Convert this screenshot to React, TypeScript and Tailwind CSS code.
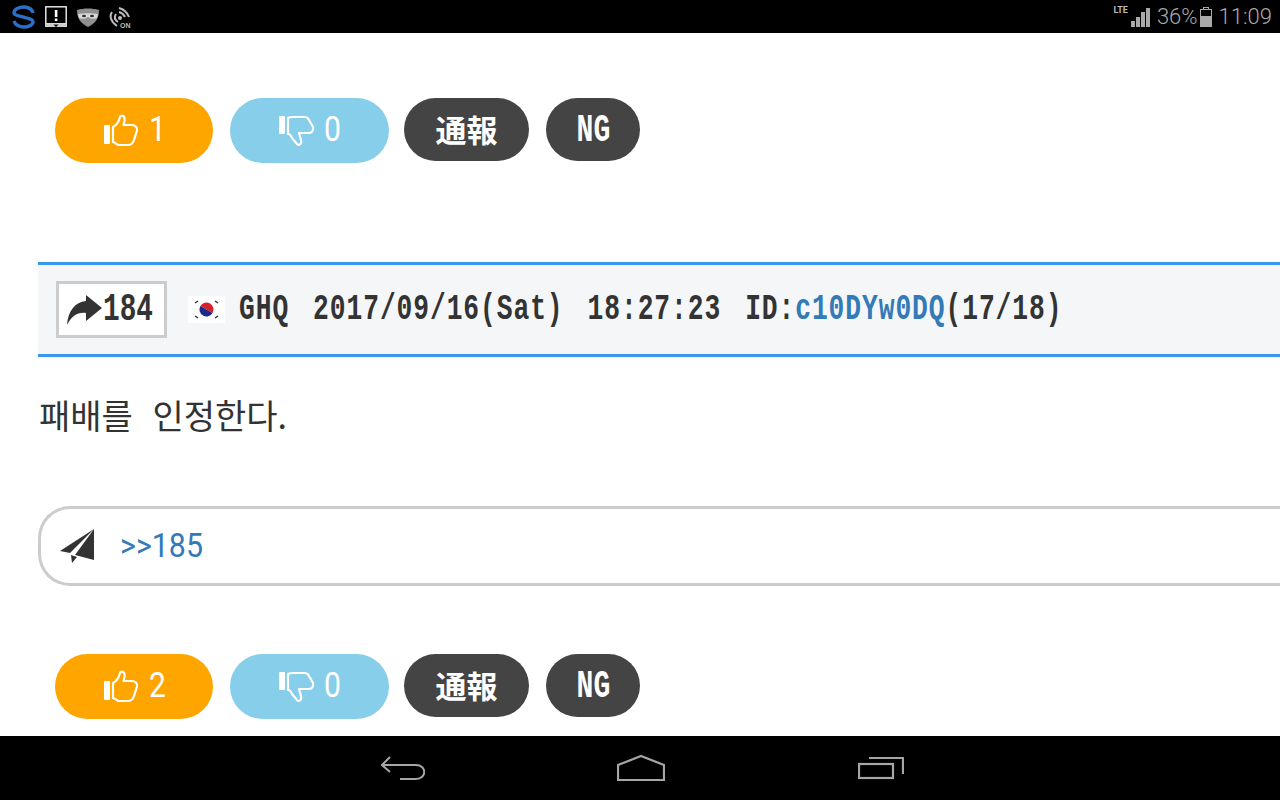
const mono = "font-['Liberation_Mono','Noto_Sans_CJK_KR',monospace]"

function ThumbUp() {
  return (
    <svg width="36" height="34" viewBox="0 0 36 34" fill="none">
      <rect x="0" y="11" width="6" height="19" rx="1" fill="white" />
      <path d="M9 13 C13 11 15 7 16 3 C16.500 1 20 1 20.500 4 C21 7 20 9 19.500 11 L28 11 C31 11 34 14 33 16.500 L30 26 C29 29 27 31 24 31 L14 31 C12.500 29 11 29 9 28 Z" stroke="white" strokeWidth="2.2" strokeLinejoin="round" />
    </svg>
  )
}

function ThumbDown() {
  return (
    <svg width="36" height="34" viewBox="0 0 36 34" fill="none">
      <rect x="0" y="2" width="6" height="18" rx="1" fill="white" />
      <path d="M9 4 C11 3 12 3 14 3 L26 3 C28 3 29 4 30 6 L34 13 C35 16 33 19 30 19 L20 19 L22 26 C23 30 20 32 18 30 L13 24 C12 21 11 20 9 20 Z" stroke="white" strokeWidth="2.2" strokeLinejoin="round" />
    </svg>
  )
}

function Buttons({ up }: { up: number }) {
  return (
    <div className="flex items-start pl-[55px] h-[66px]">
      <div className="w-[158px] h-[65px] rounded-[33px] bg-[#ffa500] flex items-center pl-[49px] text-white text-[35px] font-['Roboto',sans-serif] font-normal">
        <ThumbUp />
        <span className="ml-[9px] inline-block origin-left [transform:scaleX(0.86)]">{up}</span>
      </div>
      <div className="ml-[17px] w-[159px] h-[65px] rounded-[33px] bg-[#87ceeb] flex items-center pl-[49px] text-white text-[35px] font-['Roboto',sans-serif] font-normal">
        <ThumbDown />
        <span className="ml-[9px] inline-block origin-left [transform:scaleX(0.86)]">0</span>
      </div>
      <div className="ml-[15px] w-[125px] h-[63px] rounded-[32px] bg-[#444444] flex items-center justify-center text-white text-[31px] font-bold font-['Noto_Sans_CJK_JP',sans-serif]">
        通報
      </div>
      <div className="ml-[17px] w-[94px] h-[63px] rounded-[32px] bg-[#444444] flex items-center justify-center text-white">
        <span className={`${mono} font-bold text-[39px] leading-none mt-[3px] inline-block [transform:scaleX(0.72)]`}>NG</span>
      </div>
    </div>
  )
}

export default function App() {
  return (
    <div className="w-[1280px] h-[800px] overflow-hidden flex flex-col bg-white">
      {/* status bar */}
      <div className="h-[33px] bg-black flex items-center justify-between shrink-0 pl-[12px] pr-[8px]">
        <div className="flex items-center gap-[9px]">
          <svg width="24" height="24" viewBox="0 0 24 24" fill="none">
            <path d="M21 8 C20 3 14 2 12 2 C7 2 2 4 2 8 C2 12 21 12 21 17 C21 20 16 22 12 22 C8 22 3 20 2 16" stroke="#2a6fc9" strokeWidth="3.4" />
          </svg>
          <svg width="22" height="22" viewBox="0 0 22 22">
            <rect x="0.800" y="0.800" width="20.400" height="17" fill="black" stroke="#e4e4e4" strokeWidth="1.500" />
            <path d="M0 18 H8 L11 21 L14 18 H22 V21 H0 Z" fill="#d0d0d0" />
            <rect x="9.800" y="4" width="2.600" height="7" fill="white" />
            <rect x="9.800" y="12.500" width="2.600" height="2.600" fill="white" />
          </svg>
          <svg width="24" height="20" viewBox="0 0 24 20">
            <path d="M1 3 C8 1 16 1 23 3 C23 11 20 16 12 20 C4 16 1 11 1 3 Z" fill="#8f8f8f" />
            <path d="M2 7 C8 6 16 6 22 7 L21 11 C16 13 14 11 12 10 C10 11 8 13 3 11 Z" fill="#d8d8d8" />
            <ellipse cx="8" cy="9" rx="2" ry="1.300" fill="#333" />
            <ellipse cx="16" cy="9" rx="2" ry="1.300" fill="#333" />
          </svg>
          <svg width="24" height="24" viewBox="0 0 24 24" fill="none">
            <path d="M3 7 C0 11 2 17 8 21" stroke="#bbb" strokeWidth="2" />
            <path d="M7 9 C5 12 6 15 9 17" stroke="#bbb" strokeWidth="2" />
            <path d="M10 3 C14 4 18 7 20 12" stroke="#bbb" strokeWidth="2" />
            <path d="M10 7 C12 7.500 15 10 16 12" stroke="#bbb" strokeWidth="2" />
            <circle cx="11" cy="13" r="2" fill="#bbb" />
            <text x="11" y="23" fontSize="7" fontWeight="700" fill="#bbb" fontFamily="Liberation Sans">ON</text>
          </svg>
        </div>
        <div className="flex items-center text-[#a9a9a9] font-['Roboto',sans-serif] text-[22px] font-light">
          <span className="text-[9px] font-bold self-start mt-[4px] mr-[2px] text-[#bdbdbd]">LTE</span>
          <svg width="20" height="20" viewBox="0 0 20 20" className="mr-[7px]" fill="#a9a9a9">
            <rect x="1" y="14" width="4" height="6" />
            <rect x="6" y="10" width="4" height="10" />
            <rect x="11" y="5" width="4" height="15" />
            <rect x="16" y="1" width="4" height="19" />
          </svg>
          <span>36%</span>
          <svg width="12" height="20" viewBox="0 0 12 20" className="ml-[2px] mr-[7px]">
            <rect x="3.500" y="0.500" width="5" height="2" fill="none" stroke="#a9a9a9" />
            <rect x="0.500" y="2.500" width="11" height="17" fill="none" stroke="#a9a9a9" />
            <rect x="1" y="9" width="10" height="11" fill="#a9a9a9" />
          </svg>
          <span>11:09</span>
        </div>
      </div>

      {/* page */}
      <div className="flex-1 overflow-hidden">
        <div className="pt-[65px]">
          <Buttons up={1} />
        </div>

        <div className="mt-[98px] ml-[38px] h-[95px] bg-[#f4f6f8] border-y-[3px] border-[#3b97ea] flex items-center pl-[18px]">
          <div className="w-[111px] h-[57px] bg-white border-[3px] border-[#cccccc] flex items-center pl-[8px] shrink-0">
            <svg width="36" height="31" viewBox="0 0 36 31" fill="#333333" className="shrink-0">
              <path d="M0 31 C1 17 8 8 19 7 L19 1 L35 14 L19 27 L19 19 C10 18 5 22 0 31 Z" />
            </svg>
            <span className={`${mono} font-bold text-[38px] text-[#333333] inline-block w-[48px] origin-left [transform:scaleX(0.73)] leading-none`}>184</span>
          </div>
          <svg width="37" height="27" viewBox="0 0 37 27" className="ml-[21px] shrink-0">
            <rect width="37" height="27" fill="white" />
            <g transform="rotate(30 18.500 13.500)">
              <path d="M11.500 13.500 A7 7 0 0 1 25.500 13.500 Z" fill="#d8202c" />
              <path d="M11.500 13.500 A7 7 0 0 0 25.500 13.500 Z" fill="#1d2a86" />
            </g>
            <g stroke="#333" strokeWidth="1.500">
              <path d="M7 7 L10 5" />
              <path d="M30 7 L27 5" />
              <path d="M7 20 L10 22" />
              <path d="M30 20 L27 22" />
            </g>
          </svg>
          <div className={`${mono} ml-[14px] font-bold text-[36px] tracking-[1.27px] [word-spacing:10px] text-[#333333] whitespace-pre origin-left [transform:scaleX(0.73)]`}>
            {'GHQ 2017/09/16(Sat) 18:27:23 ID:'}
            <span className="text-[#337ab7]">c10DYw0DQ</span>
            {'(17/18)'}
          </div>
        </div>

        <p className="mt-[33px] ml-[39px] text-[34px] leading-[50px] text-[#333333] font-['Noto_Sans_CJK_KR',sans-serif] font-normal [word-spacing:12px]">
          패배를 인정한다.
        </p>

        <div className="mt-[66px] ml-[38px] h-[80px] rounded-l-[32px] border-y-[3px] border-l-[3px] border-[#cccccc] flex items-center pl-[18px]">
          <svg width="36" height="34" viewBox="0 0 36 34" className="shrink-0" fill="#333333">
            <path d="M35 0 L1 22 L11 24 Z" />
            <path d="M35 0 L16 26 L35 31 Z" />
            <path d="M12 26 L13 34 L18 28 Z" />
          </svg>
          <span className="ml-[25px] inline-block origin-left [transform:scaleX(0.92)] text-[33px] text-[#337ab7] font-['Roboto',sans-serif] font-normal">&gt;&gt;185</span>
        </div>

        <div className="mt-[68px]">
          <Buttons up={2} />
        </div>
      </div>

      {/* nav bar */}
      <div className="h-[64px] bg-black shrink-0 flex items-center pl-[381px]">
        <svg width="44" height="24" viewBox="0 0 44 24" fill="none" stroke="#a6a6a6" strokeWidth="2">
          <path d="M9 1 L1 9 L9 16" />
          <path d="M1 9 H35 C46 9 46 23 35 23 H19" />
        </svg>
        <svg width="48" height="26" viewBox="0 0 48 26" fill="none" stroke="#a6a6a6" strokeWidth="2.200" className="ml-[192px]">
          <path d="M1 10 L24 1 L47 10 V25 H1 Z" />
        </svg>
        <svg width="46" height="24" viewBox="0 0 46 24" fill="none" stroke="#a6a6a6" strokeWidth="2.200" className="ml-[193px]">
          <rect x="1" y="8" width="34" height="14" />
          <path d="M11 2 H45 V18" />
        </svg>
      </div>
    </div>
  )
}
